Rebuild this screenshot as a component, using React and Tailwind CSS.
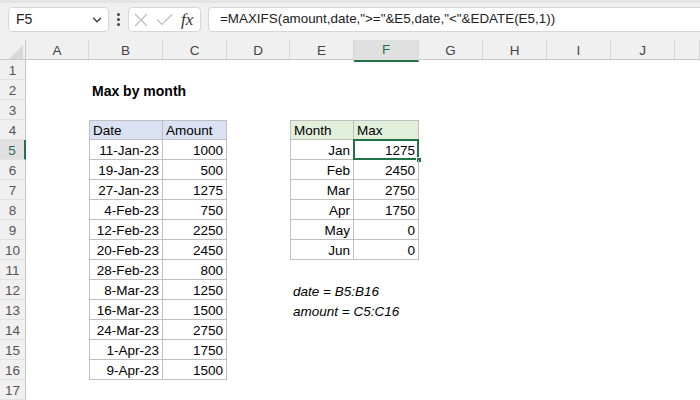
import { ChevronDown } from 'lucide-react'

const cols = ['A', 'B', 'C', 'D', 'E', 'F', 'G', 'H', 'I', 'J', '']

const dates = [
  ['11-Jan-23', 1000],
  ['19-Jan-23', 500],
  ['27-Jan-23', 1275],
  ['4-Feb-23', 750],
  ['12-Feb-23', 2250],
  ['20-Feb-23', 2450],
  ['28-Feb-23', 800],
  ['8-Mar-23', 1250],
  ['16-Mar-23', 1500],
  ['24-Mar-23', 2750],
  ['1-Apr-23', 1750],
  ['9-Apr-23', 1500],
]

const months = [
  ['Jan', 1275],
  ['Feb', 2450],
  ['Mar', 2750],
  ['Apr', 1750],
  ['May', 0],
  ['Jun', 0],
]

// cell contents keyed by column letter, per row
const buildCells = (row) => {
  const c = {}
  if (row === 2) c.B = { text: 'Max by month', cls: 'font-bold whitespace-nowrap text-[14px]' }
  if (row === 4) {
    c.B = { text: 'Date', cls: 'bg-[#d9e1f2] border-t border-l border-r border-b border-[#bfbfbf]' }
    c.C = { text: 'Amount', cls: 'bg-[#d9e1f2] border-t border-r border-b border-[#bfbfbf]' }
    c.E = { text: 'Month', cls: 'bg-[#e2efda] border-t border-l border-r border-b border-[#bfbfbf]' }
    c.F = { text: 'Max', cls: 'bg-[#e2efda] border-t border-r border-b border-[#bfbfbf]' }
  }
  if (row >= 5 && row <= 16) {
    const [d, a] = dates[row - 5]
    c.B = { text: d, right: true, cls: 'border-l border-r border-b border-[#bfbfbf]' }
    c.C = { text: a, right: true, cls: 'border-r border-b border-[#bfbfbf]' }
  }
  if (row >= 5 && row <= 10) {
    const [m, v] = months[row - 5]
    c.E = { text: m, right: true, cls: 'border-l border-r border-b border-[#bfbfbf]' }
    c.F = { text: v, right: true, cls: 'border-r border-b border-[#bfbfbf]', selected: row === 5 }
  }
  if (row === 12) c.E = { text: 'date = B5:B16', cls: 'italic whitespace-nowrap' }
  if (row === 13) c.E = { text: 'amount = C5:C16', cls: 'italic whitespace-nowrap' }
  return c
}

const gridCols = 'grid grid-cols-[26px_63px_74px_64px_63px_64px_65px_64px_64px_64px_64px_1fr]'

export default function App() {
  const rows = Array.from({ length: 17 }, (_, i) => i + 1)

  return (
    <div className="w-[700px] h-[400px] overflow-hidden bg-white flex flex-col font-['Liberation_Sans',sans-serif] text-[13.5px] text-black">
      {/* formula bar */}
      <div className="h-[40px] shrink-0 bg-[#f0f0f0] border-t-[3px] border-[#e4e4e4] flex items-start pt-[4px] pl-[8px] gap-[7px]">
        <div className="w-[101px] h-[25px] bg-white border border-[#d6d6d6] rounded-[4px] flex items-center justify-between pl-[7px] pr-[4px]">
          <span className="text-[14px] text-[#222]">F5</span>
          <ChevronDown size={14} strokeWidth={2.2} className="text-[#333]" />
        </div>
        <div className="h-[25px] flex flex-col justify-center gap-[2px] px-[1px]">
          <span className="w-[3px] h-[3px] bg-[#444] rounded-full" />
          <span className="w-[3px] h-[3px] bg-[#444] rounded-full" />
          <span className="w-[3px] h-[3px] bg-[#444] rounded-full" />
        </div>
        <div className="w-[73px] h-[25px] bg-white border border-[#d6d6d6] rounded-[4px] flex items-center pl-[5px] gap-[8px]">
          <svg width="14" height="14" viewBox="0 0 14 14" fill="none" stroke="#bdbdbd" strokeWidth="1.2">
            <path d="M1 1L13 13M13 1L1 13" />
          </svg>
          <svg width="17" height="13" viewBox="0 0 17 13" fill="none" stroke="#bdbdbd" strokeWidth="1.2">
            <path d="M1 6.5L6 11.5L16 1.5" />
          </svg>
          <span className="font-['Liberation_Serif',serif] italic text-[17px] text-[#333]">fx</span>
        </div>
        <div className="flex-1 h-[25px] bg-white border border-r-0 border-[#d6d6d6] rounded-l-[4px] flex items-center pl-[11px] text-[13.4px] text-[#222] whitespace-nowrap">
          =MAXIFS(amount,date,"&gt;="&amp;E5,date,"&lt;"&amp;EDATE(E5,1))
        </div>
      </div>

      {/* column headers */}
      <div className={`${gridCols} h-[20px] shrink-0 bg-[#f0f0f0] border-b border-[#c8c8c8] text-[#444]`}>
        <div className="border-r border-[#c8c8c8] flex items-end justify-end p-[2px]">
          <div className="w-0 h-0 border-l-[14px] border-l-transparent border-b-[14px] border-b-[#d8d8d8]" />
        </div>
        {cols.map((c, i) => (
          <div
            key={i}
            className={
              c === 'F'
                ? 'flex items-center justify-center bg-[#e0e0e0] border-b-2 border-[#217346] text-[#217346] -mb-px border-r border-r-[#d8d8d8]'
                : 'flex items-center justify-center border-r border-[#d8d8d8]'
            }
          >
            {c}
          </div>
        ))}
      </div>

      {/* sheet rows */}
      {rows.map((r) => {
        const cells = buildCells(r)
        return (
          <div key={r} className={`${gridCols} h-[20px] shrink-0`}>
            <div
              className={
                r === 5
                  ? 'bg-[#e0e0e0] border-r-2 border-[#217346] flex items-center justify-center pt-[3px] leading-none text-[#217346] border-b border-b-[#e2e2e2]'
                  : 'bg-[#f0f0f0] border-r border-[#c8c8c8] flex items-center justify-center pt-[3px] leading-none text-[#555] border-b border-b-[#e2e2e2]'
              }
            >
              {r}
            </div>
            {cols.map((c, i) => {
              const cell = cells[c]
              if (!cell) return <div key={i} />
              return (
                <div key={i} className={`relative flex items-end pb-[2px] px-[3px] leading-none ${cell.cls}`}>
                  <span className={cell.right ? 'w-full text-right' : ''}>{cell.text}</span>
                  {cell.selected && (
                    <>
                      <div className="absolute -left-px -top-px -right-px -bottom-px border-2 border-[#217346]" />
                      <div className="absolute -right-[4px] -bottom-[4px] w-[6px] h-[6px] bg-[#217346] border border-white" />
                    </>
                  )}
                </div>
              )
            })}
          </div>
        )
      })}
    </div>
  )
}
